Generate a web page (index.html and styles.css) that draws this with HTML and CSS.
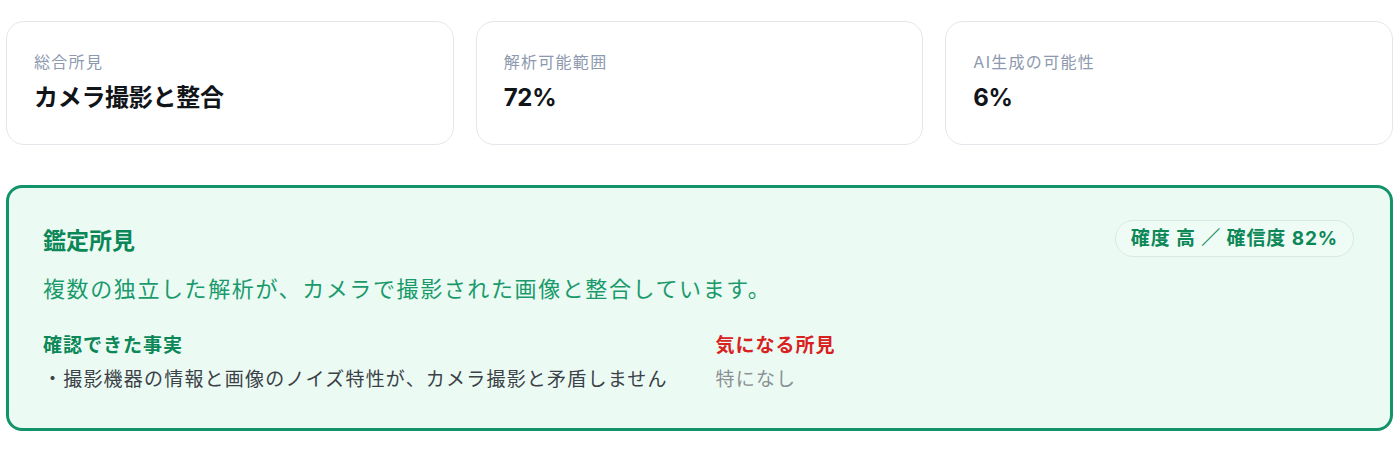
FILE: index.html
```html
<!DOCTYPE html>
<html lang="ja">

<head>
    <meta charset="UTF-8">
    <title>鑑定結果</title>
    <link rel="stylesheet" href="styles.css">
</head>

<body>
    <div class="page">
        <div class="stats">
            <div class="stat">
                <span class="stat-label">総合所見</span>
                <span class="stat-value">カメラ撮影と整合</span>
            </div>
            <div class="stat">
                <span class="stat-label">解析可能範囲</span>
                <span class="stat-value">72%</span>
            </div>
            <div class="stat">
                <span class="stat-label">AI生成の可能性</span>
                <span class="stat-value">6%</span>
            </div>
        </div>

        <div class="verdict">
            <div class="verdict-head">
                <h2>鑑定所見</h2>
                <span class="badge">確度 高 ／ 確信度 82%</span>
            </div>
            <p class="summary">複数の独立した解析が、カメラで撮影された画像と整合しています。</p>
            <div class="columns">
                <div class="col">
                    <h3 class="ok">確認できた事実</h3>
                    <ul>
                        <li>・撮影機器の情報と画像のノイズ特性が、カメラ撮影と矛盾しません</li>
                    </ul>
                </div>
                <div class="col">
                    <h3 class="warn">気になる所見</h3>
                    <p class="none">特になし</p>
                </div>
            </div>
        </div>
    </div>
</body>

</html>
```

FILE: styles.css
```css
body,html {
  margin: 0;
  padding: 0;
  background: #fff;
  font-family: Inter, "Noto Sans CJK JP", sans-serif;
}

.page {
  padding: 21px 7px 20px 6px;
  display: flex;
  flex-direction: column;
  gap: 40px;
}

.stats {
  display: grid;
  grid-template-columns: 1fr 1fr 1fr;
  gap: 22px;
}

.stat {
  border: 1px solid #e3e7ec;
  border-radius: 18px;
  background: #fff;
  padding: 29px 27px 31px;
  display: flex;
  flex-direction: column;
  gap: 10px;
}

.stat-label {
  font-size: 16px;
  line-height: 22px;
  letter-spacing: 1.3px;
  color: #8d99ae;
}

.stat-value {
  font-size: 24px;
  line-height: 30px;
  letter-spacing: -0.3px;
  font-weight: 700;
  color: #111418;
}

.verdict {
  border: 3px solid #13936a;
  border-radius: 16px;
  background: #ebfbf3;
  padding: 32px 34px 35px 34px;
}

.verdict-head {
  display: flex;
  justify-content: space-between;
  align-items: center;
}

.verdict-head h2 {
  margin: 0;
  font-size: 23px;
  font-weight: 700;
  color: #0c8758;
}

.badge {
  margin-right: 2px;
  border: 1px solid #d7ebe1;
  border-radius: 20px;
  padding: 5px 15px 4px;
  font-size: 19px;
  line-height: 26px;
  letter-spacing: 0.9px;
  font-weight: 700;
  color: #0c8758;
  background: #effcf5;
}

.summary {
  margin: 16px 0 0;
  font-size: 22px;
  line-height: 32px;
  letter-spacing: 1.6px;
  color: #1a9a6c;
}

.columns {
  margin-top: 28px;
  display: grid;
  grid-template-columns: 1fr 1fr;
  gap: 32px;
}

.col h3 {
  margin: 0 0 8px;
  font-size: 19px;
  line-height: 26px;
  letter-spacing: 1px;
  font-weight: 700;
}

.ok {
  color: #0c8758;
}

.warn {
  color: #d92121;
}

ul {
  list-style: none;
  margin: 0;
  padding: 0;
}

li, .none {
  font-size: 19px;
  line-height: 26px;
  letter-spacing: 1.2px;
  color: #3c4148;
}

.none {
  margin: 0;
  color: #8c9096;
}
```
